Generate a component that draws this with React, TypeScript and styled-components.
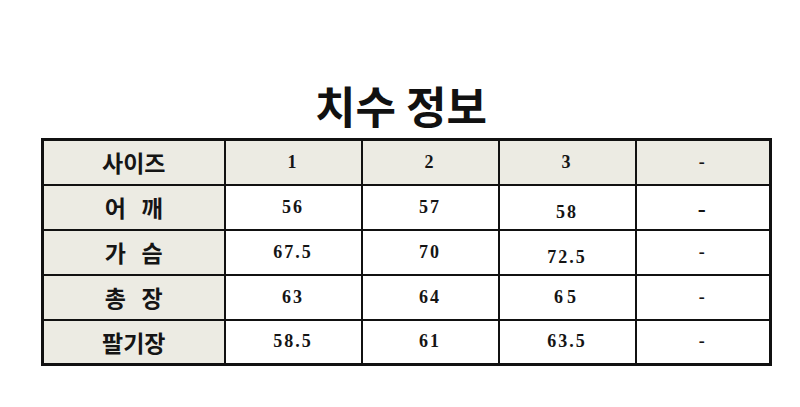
import React from 'react'
import styled, { createGlobalStyle } from 'styled-components'

const GlobalStyle = createGlobalStyle`
  html, body {
    margin: 0;
    padding: 0;
    background: #ffffff;
  }
  body {
    width: 800px;
    height: 407px;
    overflow: hidden;
  }
`

const Page = styled.div`
  width: 800px;
  height: 407px;
  display: flex;
  flex-direction: column;
  align-items: flex-start;
  box-sizing: border-box;
  padding: 78px 0 0 41px;
`

const Title = styled.h1`
  margin: 0;
  width: 728px;
  text-align: center;
  font-family: "Noto Sans CJK KR", "Noto Sans", sans-serif;
  font-weight: 700;
  font-size: 44px;
  line-height: 54px;
  letter-spacing: 0;
  color: #111;
  padding-right: 8px;
  box-sizing: border-box;
`

const Table = styled.table`
  margin-top: 6px;
  border-collapse: collapse;
  table-layout: fixed;
  width: 728px;
  border: 3px solid #111;
`

const Row = styled.tr`
  height: 45px;
`

const Cell = styled.td<{ $head?: boolean; $drop?: number; $spacing?: number; $size?: number }>`
  border: 2px solid #111;
  padding: ${({ $drop }) => ($drop ? `${$drop * 2}px 0 0` : '0')};
  text-align: center;
  vertical-align: middle;
  background: ${({ $head }) => ($head ? '#ecebe3' : '#ffffff')};
  font-family: "Liberation Serif", "Times New Roman", serif;
  font-weight: 700;
  font-size: ${({ $size }) => ($size ?? 18)}px;
  letter-spacing: ${({ $spacing }) => ($spacing ?? 2)}px;
  color: #151515;
`

const Label = styled.td`
  border: 2px solid #111;
  padding: 0;
  text-align: center;
  vertical-align: middle;
  background: #ecebe3;
  font-family: "Noto Sans CJK KR", "Noto Sans", sans-serif;
  font-weight: 700;
  font-size: 23px;
  color: #151515;
  white-space: pre;
`

type CellData = { v: string; drop?: number; spacing?: number; size?: number }

const header: CellData[] = [{ v: '1' }, { v: '2' }, { v: '3' }, { v: '-' }]

const rows: { label: string; cells: CellData[] }[] = [
  { label: '어   깨', cells: [{ v: '56' }, { v: '57' }, { v: '58', drop: 5 }, { v: '-', drop: 2, size: 24 }] },
  { label: '가   슴', cells: [{ v: '67.5' }, { v: '70' }, { v: '72.5', drop: 5 }, { v: '-' }] },
  { label: '총   장', cells: [{ v: '63' }, { v: '64' }, { v: '65', spacing: 4 }, { v: '-' }] },
  { label: '팔기장', cells: [{ v: '58.5' }, { v: '61' }, { v: '63.5' }, { v: '-' }] },
]

const widths = [182, 137, 137, 137, 135]

export default function App() {
  return (
    <>
      <GlobalStyle />
      <Page>
        <Title>치수 정보</Title>
        <Table>
          <colgroup>
            {widths.map((w, i) => (
              <col key={i} style={{ width: w }} />
            ))}
          </colgroup>
          <tbody>
            <Row>
              <Label>사이즈</Label>
              {header.map((c, i) => (
                <Cell key={i} $head>
                  {c.v}
                </Cell>
              ))}
            </Row>
            {rows.map((r) => (
              <Row key={r.label}>
                <Label>{r.label}</Label>
                {r.cells.map((c, i) => (
                  <Cell key={i} $drop={c.drop} $spacing={c.spacing} $size={c.size}>
                    {c.v}
                  </Cell>
                ))}
              </Row>
            ))}
          </tbody>
        </Table>
      </Page>
    </>
  )
}
